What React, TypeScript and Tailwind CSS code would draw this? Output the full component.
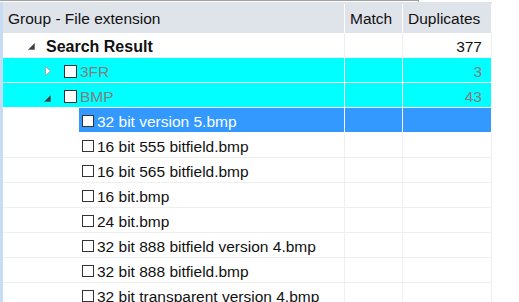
import React from 'react';

type Row = {
  label: string;
  kind: 'root' | 'group' | 'file';
  open?: boolean;
  count?: string;
  selected?: boolean;
};

const rows: Row[] = [
  { label: 'Search Result', kind: 'root', open: true, count: '377' },
  { label: '3FR', kind: 'group', open: false, count: '3' },
  { label: 'BMP', kind: 'group', open: true, count: '43' },
  { label: '32 bit version 5.bmp', kind: 'file', selected: true },
  { label: '16 bit 555 bitfield.bmp', kind: 'file' },
  { label: '16 bit 565 bitfield.bmp', kind: 'file' },
  { label: '16 bit.bmp', kind: 'file' },
  { label: '24 bit.bmp', kind: 'file' },
  { label: '32 bit 888 bitfield version 4.bmp', kind: 'file' },
  { label: '32 bit 888 bitfield.bmp', kind: 'file' },
  { label: '32 bit transparent version 4.bmp', kind: 'file' },
];

const Expander = ({ open }: { open?: boolean }) =>
  open ? (
    <svg width="7" height="7" viewBox="0 0 7 7" className="block">
      <path d="M6.5 0.5 L6.5 6.5 L0.5 6.5 Z" fill="#404040" stroke="#5a5a5a" strokeWidth="0.6" />
    </svg>
  ) : (
    <svg width="6" height="10" viewBox="0 0 6 10" className="block">
      <path d="M0.5 0.5 L5.5 5 L0.5 9.5 Z" fill="#fff" stroke="#a6a6a6" strokeWidth="1" />
    </svg>
  );

const Box = ({ size }: { size: number }) => (
  <div
    className="shrink-0 mt-[2px] border border-[#333] bg-white"
    style={{ width: size, height: size }}
  />
);

export default function App() {
  return (
    <div className="w-[519px] h-[302px] overflow-hidden bg-white text-[15.5px] text-[#111] font-['Liberation_Sans',Arial,sans-serif]">
      <div className="flex h-[2px]">
        <div className="w-[418px] h-px bg-[#a0a0a0]" />
        <div className="w-px h-[2px] bg-[#a0a0a0]" />
      </div>
      <div className="flex">
        <div className="w-[3px] shrink-0 bg-[#c5dcf2] h-[300px]" />
        <div className="w-[489px] shrink-0">
          <div className="flex h-[31px] pt-[2px] bg-[#dfe3ea]">
            <div className="w-[342px] border-r border-white flex items-center pl-[5px]">Group - File extension</div>
            <div className="w-[58px] border-r border-white flex items-center pl-[5px]">Match</div>
            <div className="w-[89px] border-r border-white flex items-center pl-[5px]">Duplicates</div>
          </div>

          {rows.map((r) => {
            const cyan = r.kind === 'group';
            const sel = r.selected;
            const line = cyan || sel ? 'border-white' : 'border-[#efefef]';
            const rowBg = cyan ? 'bg-[#00ffff]' : '';
            const cellBg = sel ? 'bg-[#3399ff]' : '';
            const txt = cyan ? 'text-[#808080]' : sel ? 'text-white' : 'text-[#111]';
            return (
              <div key={r.label} className={`flex h-[25px] ${rowBg}`}>
                <div className={`w-[342px] h-full border-r border-b ${line} flex items-center overflow-hidden whitespace-nowrap`}>
                  {r.kind === 'root' && (
                    <>
                      <div className="w-[25px]" />
                      <div className="w-[18px] flex items-start h-full pt-[10px]">
                        <Expander open />
                      </div>
                      <span className="font-bold text-[16px] mt-[3px]">{r.label}</span>
                    </>
                  )}
                  {r.kind === 'group' && (
                    <>
                      <div className="w-[41px]" />
                      <div className="w-[20px] flex justify-start items-center h-full">
                        {r.open ? (
                          <div className="pt-[7px]"><Expander open /></div>
                        ) : (
                          <div className="pl-[1px] pt-[2px]"><Expander /></div>
                        )}
                      </div>
                      <Box size={13} />
                      <span className={`pl-[3px] mt-[3px] ${txt}`}>{r.label}</span>
                    </>
                  )}
                  {r.kind === 'file' && (
                    <>
                      <div className="w-[76px] shrink-0" />
                      <div className={`flex-1 h-full flex items-center pl-[3px] ${cellBg}`}>
                        <Box size={12} />
                        <span className={`pl-[3px] mt-[3px] ${txt}`}>{r.label}</span>
                      </div>
                    </>
                  )}
                </div>
                <div className={`w-[58px] h-full border-r border-b ${line} ${cellBg}`} />
                <div className={`w-[89px] h-full border-r border-b ${line} ${cellBg} flex items-center justify-end pr-[9px] ${txt}`}>
                  <span className="mt-[3px]">{r.count}</span>
                </div>
              </div>
            );
          })}
        </div>
      </div>
    </div>
  );
}
